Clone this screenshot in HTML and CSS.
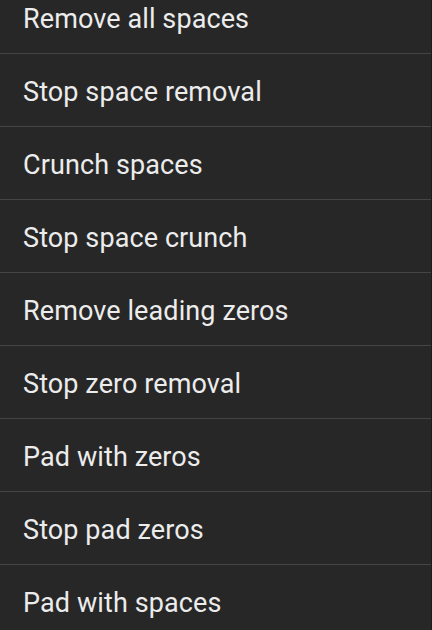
FILE: index.html
```html
<!DOCTYPE html>
<html>
<head>
<meta charset="utf-8">
<link rel="stylesheet" href="styles.css">
</head>
<body>
<ul class="menu">
  <li class="item">Remove all spaces</li>
  <li class="item">Stop space removal</li>
  <li class="item">Crunch spaces</li>
  <li class="item">Stop space crunch</li>
  <li class="item">Remove leading zeros</li>
  <li class="item">Stop zero removal</li>
  <li class="item">Pad with zeros</li>
  <li class="item">Stop pad zeros</li>
  <li class="item">Pad with spaces</li>
</ul>
</body>
</html>
```
FILE: styles.css
```css
html, body {
  margin: 0;
  padding: 0;
  background: #272727;
  height: 100%;
  overflow: hidden;
}
.menu {
  list-style: none;
  margin: -19px 0 0 0;
  padding: 0;
  border-right: 1px solid #1c1c1c;
}
.item {
  box-sizing: content-box;
  height: 69px;
  padding: 3px 0 0 23px;
  border-bottom: 1px solid #454545;
  display: flex;
  align-items: center;
  font-family: Roboto, "Noto Sans", sans-serif;
  font-size: 27px;
  letter-spacing: 0.1px;
  color: #ececec;
}
```
